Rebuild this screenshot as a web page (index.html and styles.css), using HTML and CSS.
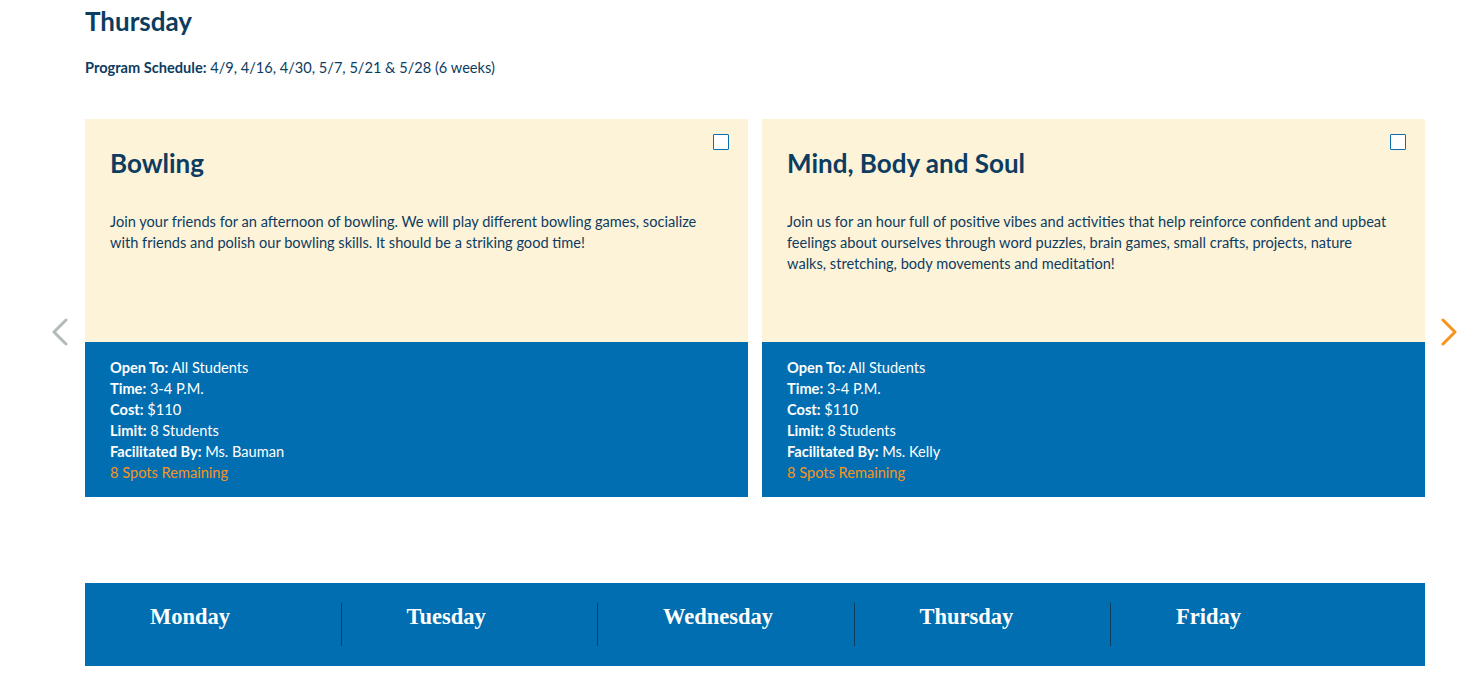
FILE: index.html
```html
<!DOCTYPE html>
<html>
<head>
<meta charset="utf-8">
<link rel="stylesheet" href="styles.css">
</head>
<body>
<main class="page">
  <h1 class="day-title">Thursday</h1>
  <p class="schedule"><strong>Program Schedule:</strong> 4/9, 4/16, 4/30, 5/7, 5/21 &amp; 5/28 (6 weeks)</p>

  <section class="carousel">
    <button class="arrow arrow-prev" aria-label="Previous">
      <svg width="18" height="28" viewBox="0 0 18 28"><path d="M15 2 L3 14 L15 26" fill="none" stroke="#b3bbb7" stroke-width="3" stroke-linecap="round" stroke-linejoin="round"/></svg>
    </button>
    <div class="cards">
      <article class="card">
        <div class="card-top">
          <span class="check"></span>
          <h2 class="card-title">Bowling</h2>
          <p class="card-desc">Join your friends for an afternoon of bowling. We will play different bowling games, socialize with friends and polish our bowling skills. It should be a striking good time!</p>
        </div>
        <div class="card-info">
          <p><strong>Open To:</strong> All Students</p>
          <p><strong>Time:</strong> 3-4 P.M.</p>
          <p><strong>Cost:</strong> $110</p>
          <p><strong>Limit:</strong> 8 Students</p>
          <p><strong>Facilitated By:</strong> Ms. Bauman</p>
          <p class="spots">8 Spots Remaining</p>
        </div>
      </article>
      <article class="card">
        <div class="card-top">
          <span class="check"></span>
          <h2 class="card-title">Mind, Body and Soul</h2>
          <p class="card-desc">Join us for an hour full of positive vibes and activities that help reinforce confident and upbeat feelings about ourselves through word puzzles, brain games, small crafts, projects, nature walks, stretching, body movements and meditation!</p>
        </div>
        <div class="card-info">
          <p><strong>Open To:</strong> All Students</p>
          <p><strong>Time:</strong> 3-4 P.M.</p>
          <p><strong>Cost:</strong> $110</p>
          <p><strong>Limit:</strong> 8 Students</p>
          <p><strong>Facilitated By:</strong> Ms. Kelly</p>
          <p class="spots">8 Spots Remaining</p>
        </div>
      </article>
    </div>
    <button class="arrow arrow-next" aria-label="Next">
      <svg width="18" height="28" viewBox="0 0 18 28"><path d="M3 2 L15 14 L3 26" fill="none" stroke="#f7941d" stroke-width="3" stroke-linecap="round" stroke-linejoin="round"/></svg>
    </button>
  </section>

  <nav class="days">
    <a class="day">Monday</a>
    <a class="day">Tuesday</a>
    <a class="day">Wednesday</a>
    <a class="day">Thursday</a>
    <a class="day last">Friday</a>
  </nav>
</main>
</body>
</html>
```

FILE: styles.css
```css
* { box-sizing: border-box; }
html, body { margin: 0; padding: 0; background: #fff; }
body {
  font-family: "Lato", "Open Sans", sans-serif;
  color: #0d3c61;
}
.page {
  padding: 0 41px 0 85px;
}
.day-title {
  margin: 0;
  padding-top: 5px;
  font-size: 26px;
  line-height: 32px;
  font-weight: 700;
  color: #0d3c61;
}
.schedule {
  margin: 21px 0 0;
  font-size: 14.6px;
  line-height: 20px;
}
.schedule strong { font-weight: 700; }
.carousel {
  position: relative;
  margin-top: 41px;
}
.cards {
  display: flex;
  gap: 14px;
}
.card {
  width: 663px;
  display: flex;
  flex-direction: column;
}
.card-top {
  position: relative;
  background: #fdf3d8;
  height: 223px;
  padding: 27px 25px 0;
}
.check {
  position: absolute;
  top: 15px;
  right: 19px;
  width: 16px;
  height: 16px;
  background: #fff;
  border: 1.5px solid #0a6eb0;
  border-radius: 1px;
}
.card-title {
  margin: 0;
  font-size: 26px;
  line-height: 34px;
  font-weight: 700;
  color: #0d3c61;
}
.card-desc {
  margin: 31px 0 0;
  max-width: 604px;
  font-size: 14.6px;
  line-height: 21px;
  color: #0d3c61;
}
.card-info {
  background: #006eb0;
  height: 155px;
  padding: 15px 25px 0;
  color: #fff;
}
.card-info p {
  margin: 0;
  font-size: 14.6px;
  line-height: 21px;
}
.card-info strong { font-weight: 700; }
.card-info .spots { color: #f7941d; }
.arrow {
  position: absolute;
  top: 199px;
  background: none;
  border: 0;
  padding: 0;
  width: 18px;
  height: 28px;
  cursor: pointer;
}
.arrow svg { display: block; }
.arrow-prev { left: -34px; }
.arrow-next { right: -33px; }
.days {
  display: flex;
  margin-top: 86px;
  background: #006eb0;
  padding: 20px 0;
  width: 1340px;
}
.day {
  width: 256.5px;
  padding-left: 65px;
  height: 43px;
  line-height: 28px;
  border-right: 1px solid #0d3c61;
  font-family: "Liberation Serif", "DejaVu Serif", serif;
  font-weight: 700;
  font-size: 22.5px;
  color: #fff;
}
.day.last { border-right: 0; }
```
